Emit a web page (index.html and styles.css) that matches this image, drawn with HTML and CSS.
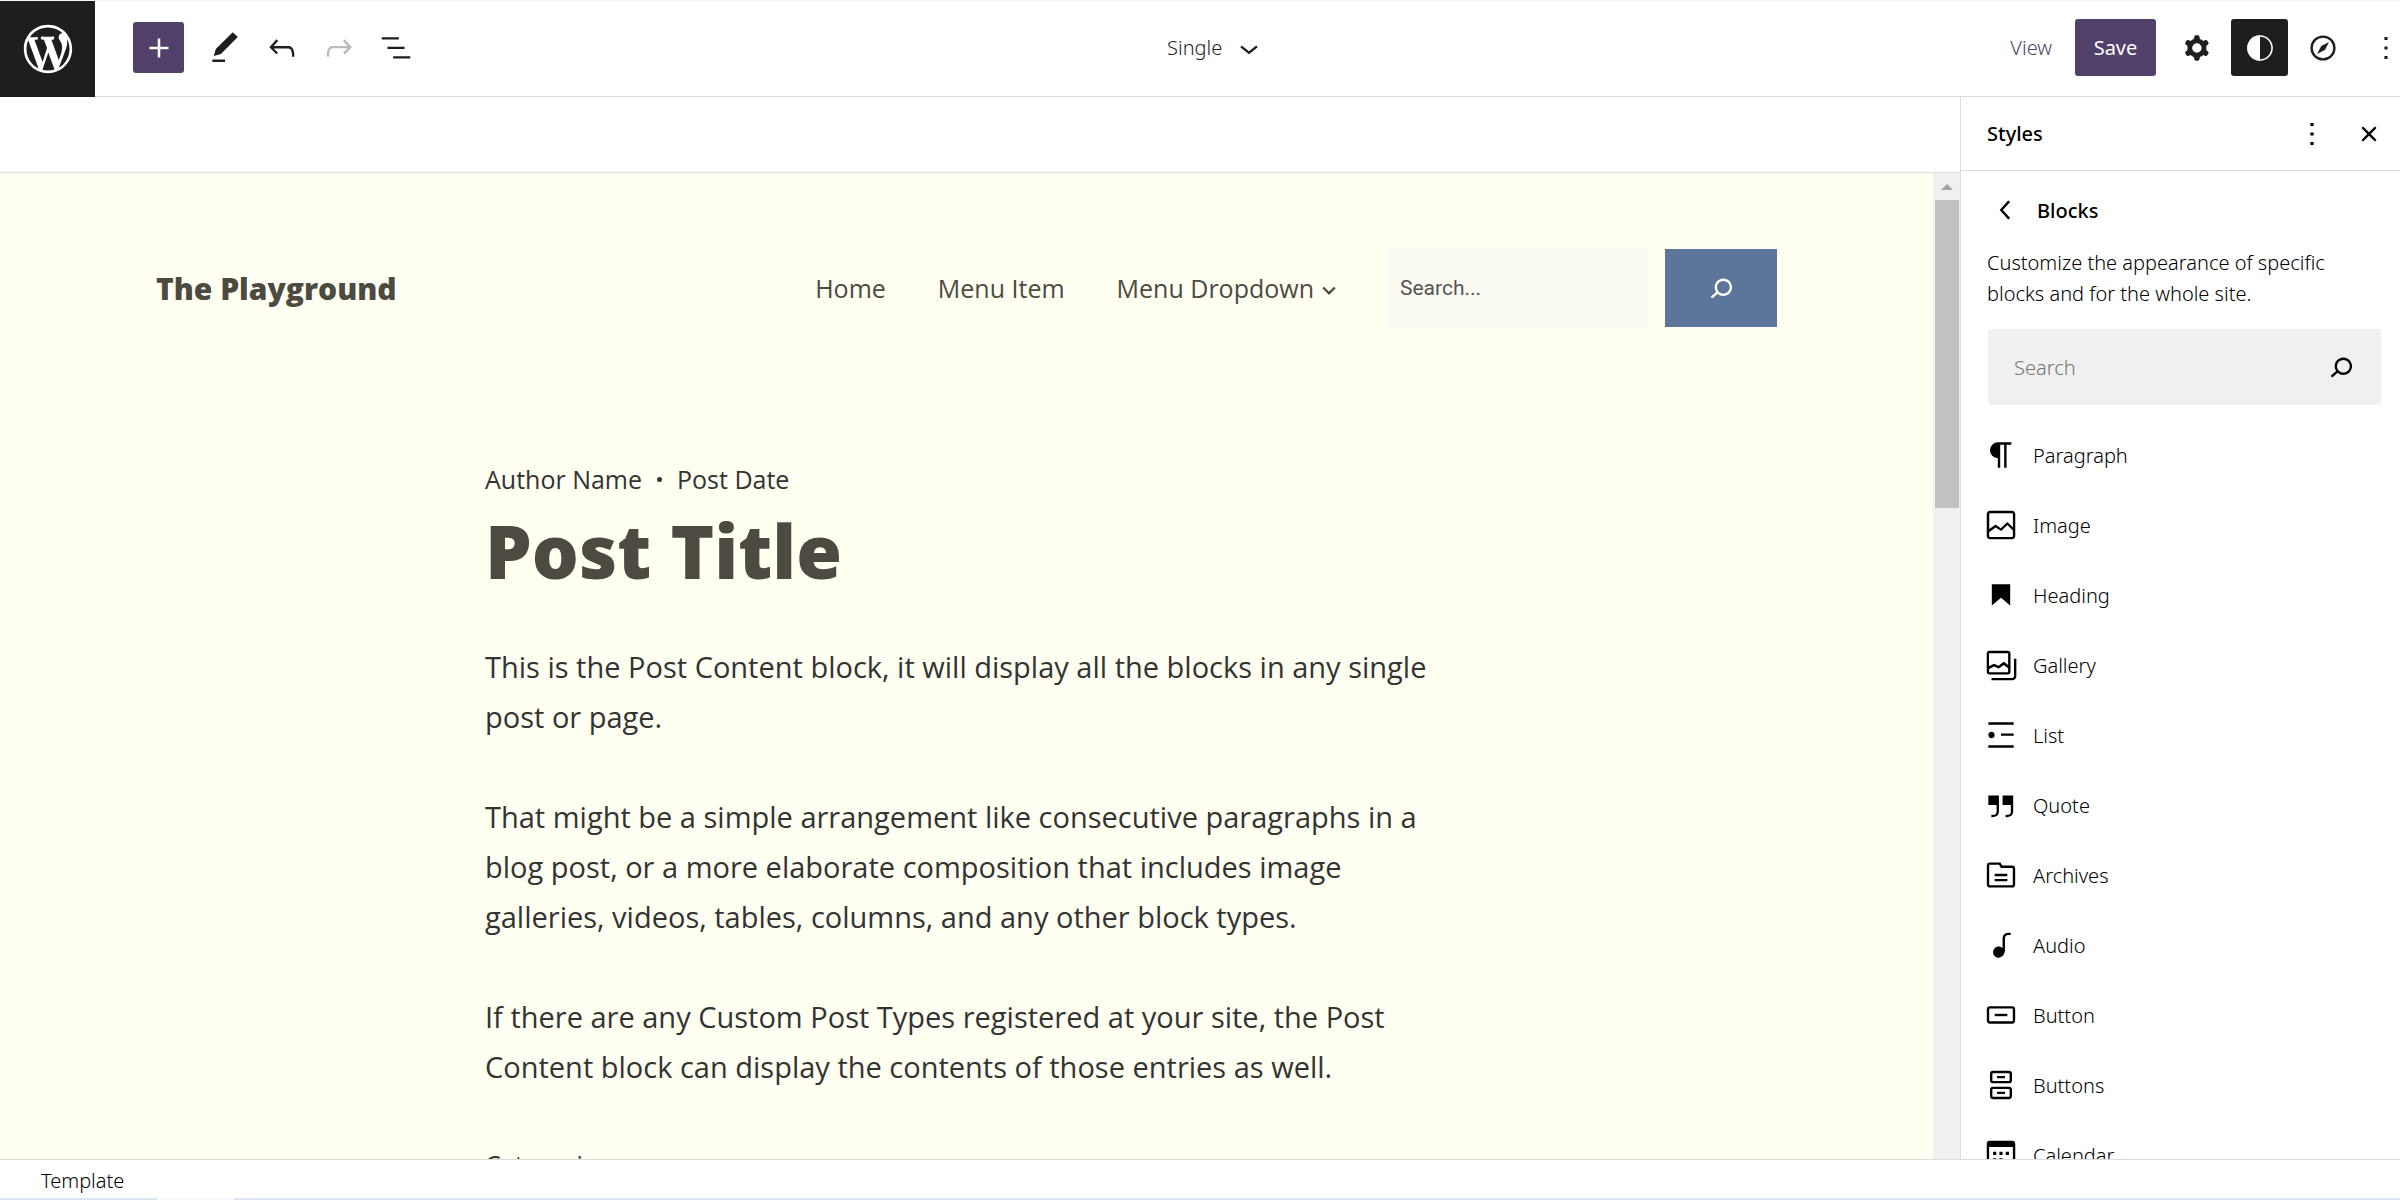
FILE: index.html
```html
<!DOCTYPE html>
<html lang="en">
<head>
<meta charset="utf-8">
<title>Editor – Single</title>
<link rel="stylesheet" href="styles.css">
</head>
<body>
<div class="editor">
  <header class="topbar">
    <a class="logo" href="#" aria-label="Dashboard"><svg viewBox="-2 -2 24 24"><path d="M20 10c0-5.51-4.49-10-10-10C4.48 0 0 4.49 0 10c0 5.52 4.48 10 10 10 5.51 0 10-4.48 10-10zM7.78 15.37L4.37 6.22c.55-.02 1.17-.08 1.17-.08.5-.06.44-1.13-.06-1.11 0 0-1.45.11-2.37.11-.18 0-.37 0-.58-.01C4.12 2.69 6.87 1.11 10 1.11c2.33 0 4.45.87 6.05 2.34-.68-.11-1.65.39-1.65 1.58 0 .74.45 1.36.9 2.1.35.61.55 1.36.55 2.46 0 1.49-1.4 5-1.4 5l-3.03-8.37c.54-.02.82-.17.82-.17.5-.05.44-1.25-.06-1.22 0 0-1.44.12-2.38.12-.87 0-2.33-.12-2.33-.12-.5-.03-.56 1.2-.06 1.22l.92.08 1.26 3.41zM17.41 10c.24-.64.74-1.87.43-4.25.7 1.29 1.05 2.71 1.05 4.25 0 3.29-1.73 6.24-4.4 7.78.97-2.59 1.94-5.2 2.92-7.78zM6.1 18.09C3.12 16.65 1.11 13.53 1.11 10c0-1.3.23-2.48.72-3.59C3.25 10.3 4.67 14.2 6.1 18.09zm4.03-6.63l2.58 6.98c-.86.29-1.76.45-2.71.45-.79 0-1.57-.11-2.29-.33.81-2.38 1.62-4.74 2.42-7.1z"/></svg></a>
    <div class="tools">
      <button class="inserter" aria-label="Add block"><svg viewBox="0 0 24 24"><path d="M18 11.2h-5.2V6h-1.6v5.2H6v1.6h5.2V18h1.6v-5.2H18z"/></svg></button>
      <div class="tool-group">
        <button class="icon-btn" aria-label="Tools"><svg viewBox="0 0 24 24"><path d="M20.1 5.1L16.9 2 6.2 12.7l-1.3 4.4 4.5-1.3L20.1 5.1zM4 20.8h8v-1.5H4v1.5z"/></svg></button>
        <button class="icon-btn" aria-label="Undo"><svg viewBox="0 0 24 24"><path d="M18.3 11.7c-.6-.6-1.4-.9-2.3-.9H6.7l2.9-3.3-1.1-1-4.5 5L8.5 16l1-1-2.7-2.7H16c.5 0 .9.2 1.3.5 1 1 1 3.4 1 4.5v.3h1.5v-.2c0-1.5 0-4.3-1.5-5.7z"/></svg></button>
        <button class="icon-btn" aria-label="Redo" disabled><svg viewBox="0 0 24 24"><path d="M15.6 6.5l-1.1 1 2.9 3.3H8c-.9 0-1.7.3-2.3.9-1.4 1.5-1.4 4.2-1.4 5.6v.2h1.5v-.3c0-1.1 0-3.5 1-4.5.3-.3.7-.5 1.3-.5h9.2L14.5 15l1.1 1.1 4.6-4.6-4.6-5z"/></svg></button>
        <button class="icon-btn" aria-label="List view"><svg viewBox="0 0 24 24"><path d="M13.8 5.2H3v1.5h10.8V5.2zm-3.6 12v1.5H21v-1.5H10.2zm7.2-6H6.6v1.5h10.8v-1.5z"/></svg></button>
      </div>
    </div>
    <div class="doc-switch">
      <button class="doc-btn">Single<svg viewBox="0 0 24 24"><path d="M17.5 11.6L12 16l-5.5-4.4.9-1.2L12 14l4.5-3.6 1 1.2z"/></svg></button>
    </div>
    <div class="actions">
      <button class="view-btn">View</button>
      <button class="save-btn">Save</button>
      <div class="action-icons">
        <button class="icon-btn" aria-label="Settings"><svg viewBox="0 0 24 24"><path fill-rule="evenodd" d="M10.289 4.836A1 1 0 0111.275 4h1.306a1 1 0 01.987.836l.244 1.466c.787.26 1.503.679 2.108 1.218l1.393-.522a1 1 0 011.216.437l.653 1.13a1 1 0 01-.23 1.273l-1.148.944a6.025 6.025 0 010 2.435l1.149.946a1 1 0 01.23 1.272l-.653 1.13a1 1 0 01-1.216.437l-1.394-.522c-.605.54-1.32.958-2.108 1.218l-.244 1.466a1 1 0 01-.987.836h-1.306a1 1 0 01-.986-.836l-.244-1.466a5.995 5.995 0 01-2.108-1.218l-1.394.522a1 1 0 01-1.217-.436l-.653-1.131a1 1 0 01.23-1.272l1.149-.946a6.026 6.026 0 010-2.435l-1.148-.944a1 1 0 01-.23-1.272l.653-1.131a1 1 0 011.217-.437l1.393.522a5.994 5.994 0 012.108-1.218l.244-1.466zM14.929 12a3 3 0 11-6 0 3 3 0 016 0z"/></svg></button>
        <button class="icon-btn pressed" aria-label="Styles" aria-pressed="true"><svg viewBox="0 0 24 24"><circle cx="12" cy="12" r="7.6" fill="none" stroke="currentColor"/><path d="M12 4a8 8 0 000 16z"/></svg></button>
        <button class="icon-btn" aria-label="Navigation"><svg viewBox="0 0 24 24"><circle cx="12" cy="12" r="7.2" fill="none" stroke="currentColor" stroke-width="1.5"/><path d="M15.8 8.2l-2.6 5-5 2.6 2.7-5.1z"/></svg></button>
        <button class="icon-btn" aria-label="Options"><svg viewBox="0 0 24 24"><path d="M13 19h-2v-2h2v2zm0-6h-2v-2h2v2zm0-6h-2V5h2v2z"/></svg></button>
      </div>
    </div>
  </header>

  <div class="workspace">
    <main class="stage">
      <div class="stage-bar"></div>
      <div class="frame">
        <div class="site">
          <header class="site-header">
            <a class="site-title" href="#">The Playground</a>
            <nav class="site-nav">
              <a href="#">Home</a>
              <a href="#">Menu Item</a>
              <a href="#">Menu Dropdown<svg class="caret" viewBox="0 0 12 12"><path d="M1 3l5 5 5-5"/></svg></a>
            </nav>
            <form class="site-search">
              <input type="search" placeholder="Search..." aria-label="Site search">
              <button type="button" aria-label="Submit search"><svg viewBox="0 0 24 24"><path d="M13.5 6C10.5 6 8 8.5 8 11.5c0 1.1.3 2.1.9 3l-3.4 3 1 1.1 3.4-2.9c1 .9 2.2 1.4 3.6 1.4 3 0 5.5-2.5 5.5-5.5C19 8.5 16.5 6 13.5 6zm0 9.5c-2.2 0-4-1.8-4-4s1.8-4 4-4 4 1.8 4 4-1.8 4-4 4z"/></svg></button>
            </form>
          </header>
          <article class="post">
            <div class="meta"><span>Author Name</span><span class="dot"></span><span>Post Date</span></div>
            <h1>Post Title</h1>
            <p>This is the Post Content block, it will display all the blocks in any single post or page.</p>
            <p>That might be a simple arrangement like consecutive paragraphs in a blog post, or a more elaborate composition that includes image galleries, videos, tables, columns, and any other block types.</p>
            <p>If there are any Custom Post Types registered at your site, the Post Content block can display the contents of those entries as well.</p>
            <div class="meta">Categories</div>
          </article>
        </div>
        <div class="scrollbar"><span class="arrow"></span><span class="thumb"></span></div>
      </div>
    </main>

    <aside class="sidebar">
      <div class="side-head">
        <strong>Styles</strong>
        <button class="icon-btn" aria-label="More styles actions"><svg viewBox="0 0 24 24"><path d="M13 19h-2v-2h2v2zm0-6h-2v-2h2v2zm0-6h-2V5h2v2z"/></svg></button>
        <button class="icon-btn" aria-label="Close styles"><svg viewBox="0 0 24 24"><path d="M12 13.06l3.712 3.713 1.061-1.06L13.061 12l3.712-3.712-1.06-1.06L12 10.938 8.288 7.227l-1.061 1.06L10.939 12l-3.712 3.712 1.06 1.061L12 13.061z"/></svg></button>
      </div>
      <div class="side-body">
        <div class="side-title">
          <button aria-label="Back"><svg viewBox="0 0 24 24"><path d="M14.6 7l-1.2-1L8 12l5.4 6 1.2-1-4.6-5z"/></svg></button>
          <h2>Blocks</h2>
        </div>
        <p class="hint">Customize the appearance of specific blocks and for the whole site.</p>
        <label class="block-search">
          <input type="search" placeholder="Search" aria-label="Search blocks">
          <svg viewBox="0 0 24 24"><path d="M13.5 6C10.5 6 8 8.5 8 11.5c0 1.1.3 2.1.9 3l-3.4 3 1 1.1 3.4-2.9c1 .9 2.2 1.4 3.6 1.4 3 0 5.5-2.5 5.5-5.5C19 8.5 16.5 6 13.5 6zm0 9.5c-2.2 0-4-1.8-4-4s1.8-4 4-4 4 1.8 4 4-1.8 4-4 4z"/></svg>
        </label>
        <ul class="blocks">
          <li><button><svg viewBox="0 0 24 24"><path d="M10 14v6h1.5V5.500H14V20h1.500V5.500h3V4H10a5 5 0 000 10z"/></svg>Paragraph</button></li>
          <li><button><svg viewBox="0 0 24 24"><path d="M19 3H5c-1.100 0-2 .9-2 2v14c0 1.100.9 2 2 2h14c1.100 0 2-.9 2-2V5c0-1.100-.9-2-2-2zM5 4.500h14c.3 0 .5.2.5.5v8.400l-3-2.900c-.3-.3-.8-.3-1 0L11.900 14 9 12c-.3-.2-.6-.2-.8 0l-3.600 2.600V5c-.1-.3.1-.5.4-.5zm14 15H5c-.3 0-.5-.2-.5-.5v-2.400l4.100-3 3 1.900c.3.2.7.2.9-.1L16 12l3.500 3.400V19c0 .3-.2.5-.5.5z"/></svg>Image</button></li>
          <li><button><svg viewBox="0 0 24 24"><path d="M6.200 5.200v13.400l5.800-4.800 5.800 4.800V5.200z"/></svg>Heading</button></li>
          <li><button><svg viewBox="0 0 24 24"><path d="M20.200 8v11c0 .7-.6 1.200-1.200 1.200H6v1.500h13c1.500 0 2.700-1.200 2.700-2.800V8h-1.500zM18 16.400V4.600c0-.9-.7-1.600-1.600-1.600H4.600C3.700 3 3 3.700 3 4.600v11.800c0 .9.7 1.600 1.600 1.600h11.800c.9 0 1.600-.7 1.600-1.600zM4.500 4.600c0-.1.1-.1.1-.1h11.800c.1 0 .1.1.1.1V12l-2.300-1.700c-.3-.2-.6-.2-.9 0l-2.900 2.100L8 11.300c-.2-.1-.5-.1-.7 0l-2.900 1.500V4.600zm0 11.800v-1.800l3.200-1.700 2.400 1.200c.2.1.5.1.8-.1l2.800-2 2.800 2v2.500c0 .1-.1.1-.1.1H4.600c0-.1-.1-.2-.1-.2z"/></svg>Gallery</button></li>
          <li><button><svg viewBox="0 0 24 24"><path d="M4 4v1.500h16V4H4zm8 8.500h8V11h-8v1.500zM4 20h16v-1.500H4V20zm4-8c0-1.100-.9-2-2-2s-2 .9-2 2 .9 2 2 2 2-.9 2-2z"/></svg>List</button></li>
          <li><button><svg viewBox="0 0 24 24"><path d="M13 6v6h5.200v4c0 .8-.2 1.400-.5 1.700-.6.6-1.600.6-2.500.5h-.3v1.500h.5c1 0 2.300-.1 3.300-1 .6-.6 1-1.600 1-2.800V6H13zm-9 6h5.200v4c0 .8-.2 1.400-.5 1.700-.6.6-1.600.6-2.500.5h-.3v1.500h.5c1 0 2.300-.1 3.300-1 .6-.6 1-1.600 1-2.800V6H4v6z"/></svg>Quote</button></li>
          <li><button><svg class="line" viewBox="0 0 24 24"><path d="M5 4.800h6.200l1.200 2H19c.7 0 1.200.5 1.200 1.200v10c0 .7-.5 1.200-1.200 1.200H5c-.7 0-1.200-.5-1.200-1.200V6c0-.7.5-1.200 1.200-1.200zM8 12h8M8 15.200h8"/></svg>Archives</button></li>
          <li><button><svg viewBox="0 0 24 24"><path d="M17.700 4.300c-1.200 0-2.800 0-3.800 1-.6.6-.9 1.500-.9 2.600V14c-.6-.6-1.500-1-2.500-1C8.600 13 7 14.600 7 16.500S8.600 20 10.500 20c1.500 0 2.800-1 3.300-2.300.5-.8.7-1.800.7-2.500V7.900c0-.7.2-1.200.5-1.600.6-.6 1.800-.6 2.800-.6h.3V4.300h-.4z"/></svg>Audio</button></li>
          <li><button><svg class="line" viewBox="0 0 24 24"><rect x="3.800" y="7.200" width="16.400" height="9.500" rx="1.200"/><path d="M8 12h8"/></svg>Button</button></li>
          <li><button><svg class="line" viewBox="0 0 24 24"><rect x="5.800" y="3.800" width="12.400" height="6.400" rx="1.200"/><rect x="5.800" y="13.800" width="12.400" height="6.400" rx="1.200"/><path d="M9.500 7h5M9.500 17h5"/></svg>Buttons</button></li>
          <li><button><svg viewBox="0 0 24 24"><path fill-rule="evenodd" d="M19 3H5a2 2 0 00-2 2v14a2 2 0 002 2h14a2 2 0 002-2V5a2 2 0 00-2-2zm.5 16c0 .3-.2.5-.5.5H5a.5.5 0 01-.5-.5V7h15v12zM7 10h2v2H7v-2zm4 0h2v2h-2v-2zm4 0h2v2h-2v-2zm-8 4h2v2H7v-2zm4 0h2v2h-2v-2z"/></svg>Calendar</button></li>
        </ul>
      </div>
    </aside>
  </div>

  <footer class="statusbar">Template</footer>
</div>
</body>
</html>
```
FILE: styles.css
```css
* {
  box-sizing: border-box;
}

body {
  margin: 0;
  color: #000;
  background: #fff;
  font-family: "Noto Sans", sans-serif;
  font-size: 20px;
  font-weight: 300;
  line-height: 31px;
}

h1,
h2,
p,
ul {
  margin: 0;
  padding: 0;
}

ul {
  list-style: none;
}

a {
  color: inherit;
  text-decoration: none;
}

button {
  display: flex;
  align-items: center;
  justify-content: center;
  margin: 0;
  padding: 0;
  border: 0;
  background: none;
  color: inherit;
  font: inherit;
}

input {
  min-width: 0;
  margin: 0;
  border: 0;
  outline: 0;
  appearance: none;
  background: none;
  font: inherit;
}

svg {
  flex: none;
  width: 38px;
  height: 38px;
  fill: currentColor;
}

.editor {
  display: flex;
  flex-direction: column;
  height: 100vh;
  overflow: hidden;
}

/* Top bar */
.topbar {
  display: flex;
  flex: none;
  align-items: center;
  height: 97px;
  padding-bottom: 2px;
  border-top: 1px solid #f6f6f6;
  border-bottom: 1px solid #dcdcdc;
  color: #1e1e1e;
}

.logo {
  display: flex;
  align-items: center;
  align-self: flex-start;
  justify-content: center;
  width: 95px;
  height: 96px;
  background: #1e1e1e;
  color: #fff;
}

.logo svg {
  width: 58px;
  height: 58px;
}

.tools {
  display: flex;
  align-items: center;
  gap: 12px;
  margin-left: 38px;
}

.tool-group {
  display: flex;
}

.inserter {
  width: 51px;
  height: 51px;
  border-radius: 3px;
  background: #51416a;
  color: #fff;
}

.icon-btn {
  width: 57px;
  height: 57px;
  border-radius: 3px;
}

.icon-btn:disabled {
  color: #bbb;
}

.icon-btn.pressed {
  background: #1e1e1e;
  color: #fff;
}

.doc-switch {
  display: flex;
  flex: 1;
  justify-content: center;
  padding-left: 12px;
}

.doc-btn {
  gap: 8px;
}

.actions {
  display: flex;
  align-items: center;
  gap: 12px;
  margin-right: -14px;
}

.view-btn {
  height: 57px;
  padding: 0 11px;
  color: #51416a;
}

.save-btn {
  width: 81px;
  height: 57px;
  border-radius: 3px;
  background: #51416a;
  color: #fff;
  font-weight: 400;
}

.action-icons {
  display: flex;
  gap: 6px;
}

/* Canvas */
.workspace {
  display: flex;
  flex: 1;
  min-height: 0;
}

.stage {
  display: flex;
  flex: 1;
  flex-direction: column;
  min-width: 0;
}

.stage-bar {
  flex: none;
  height: 76px;
  border-bottom: 1px solid #dcdcdc;
}

.frame {
  display: flex;
  flex: 1;
  min-height: 0;
  background: #fffff2;
}

.site {
  flex: 1;
  padding: 76px 156px 0;
  overflow: hidden;
  color: #333;
  font-family: "Open Sans", sans-serif;
  font-weight: 400;
}

.site-header {
  display: flex;
  align-items: center;
  color: #4d4a42;
}

.site-title {
  margin-right: auto;
  font-size: 30px;
  font-weight: 800;
}

.site-nav {
  display: flex;
  gap: 52px;
  margin-right: 51px;
  font-size: 25px;
}

.caret {
  width: 14px;
  height: 14px;
  margin-left: 8px;
  fill: none;
  stroke: currentColor;
  stroke-width: 2;
}

.site-search {
  display: flex;
  gap: 16px;
}

.site-search input {
  width: 262px;
  height: 78px;
  padding: 0 13px;
  background: #fafaf3;
  font-family: Roboto, sans-serif;
  font-size: 21px;
  font-weight: 400;
}

.site-search input::placeholder {
  color: #555;
}

.site-search button {
  width: 112px;
  height: 78px;
  background: #5e759b;
  color: #fff;
}

.post {
  max-width: 963px;
  margin: 130px auto 0;
  font-size: 29px;
  line-height: 50px;
}

.post p {
  margin-bottom: 50px;
}

.meta {
  display: flex;
  align-items: center;
  gap: 15px;
  font-size: 25px;
  line-height: 44px;
}

.dot {
  width: 5px;
  height: 5px;
  border-radius: 50%;
  background: currentColor;
}

.post h1 {
  margin-bottom: 41px;
  color: #4d4a42;
  font-size: 74px;
  font-weight: 800;
  line-height: 100px;
}

.scrollbar {
  display: flex;
  flex: none;
  flex-direction: column;
  align-items: center;
  width: 27px;
  padding-top: 11px;
  background: #f0f0f0;
}

.arrow {
  border: 6px solid transparent;
  border-top: 0;
  border-bottom: 6px solid #a3a3a3;
}

.thumb {
  width: 24px;
  height: 308px;
  margin-top: 10px;
  background: #c1c1c1;
}

/* Styles panel */
.sidebar {
  display: flex;
  flex: none;
  flex-direction: column;
  width: 440px;
  border-left: 1px solid #dcdcdc;
}

.side-head {
  display: flex;
  flex: none;
  align-items: center;
  height: 74px;
  padding: 0 3px 0 26px;
  border-bottom: 1px solid #dcdcdc;
}

.side-head strong,
.side-title h2 {
  font-size: 20px;
  font-weight: 500;
}

.side-head strong {
  margin-right: auto;
}

.side-body {
  flex: 1;
  min-height: 0;
  padding: 20px 19px 0 26px;
  overflow: hidden;
}

.side-title {
  display: flex;
  align-items: center;
  gap: 12px;
}

.hint {
  margin: 18px 0 20px;
}

.block-search {
  display: flex;
  align-items: center;
  height: 76px;
  margin: 0 0 15px 1px;
  padding: 0 21px 0 26px;
  border-radius: 3px;
  background: #f0f0f0;
}

.block-search input {
  flex: 1;
  padding: 0;
}

.block-search input::placeholder {
  color: #757575;
}

.blocks button {
  justify-content: flex-start;
  gap: 13px;
  width: 100%;
  height: 70px;
  margin-left: -5px;
}

.line {
  fill: none;
  stroke: currentColor;
  stroke-width: 1.5;
}

/* Status bar */
.statusbar {
  flex: none;
  height: 41px;
  padding: 5px 41px;
  border-top: 1px solid #dcdcdc;
  background: linear-gradient(90deg, #dce3ed 157px, #f8f9fb 157px 234px, #dce3ed 234px) bottom / 100% 2px no-repeat;
}
```
